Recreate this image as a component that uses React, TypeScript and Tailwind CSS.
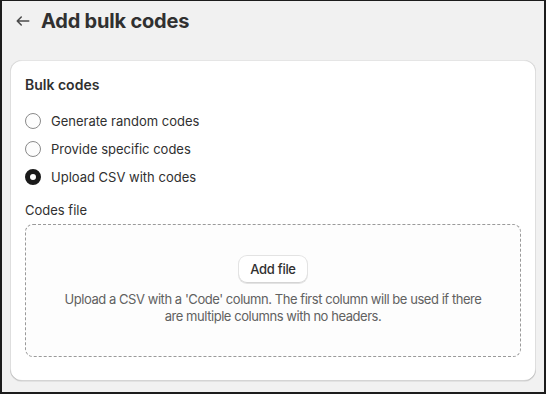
import { useState } from "react"

const font = { fontFamily: "Inter, 'Noto Sans', sans-serif" }

type Option = { id: string; label: string }

const options: Option[] = [
	{ id: "random", label: "Generate random codes" },
	{ id: "specific", label: "Provide specific codes" },
	{ id: "csv", label: "Upload CSV with codes" },
]

function Radio({ checked }: { checked: boolean }) {
	if (checked) {
		return <span className="w-4 h-4 rounded-full border-[5px] border-[#1a1a1a] bg-white shrink-0" />
	}
	return <span className="w-4 h-4 rounded-full border border-[#8a8a8a] bg-[#fdfdfd] shrink-0" />
}

export default function App() {
	const [mode, setMode] = useState("csv")

	return (
		<div style={font} className="w-[546px] h-[394px] bg-[#f1f1f1] border-l-2 border-r-2 border-b-2 border-t border-[#1c1c1c] flex flex-col text-[#303030] overflow-hidden">
			<div className="flex items-center h-[39px] pl-[11px] gap-[8px]">
				<button className="w-5 h-5 flex items-center justify-center text-[#4a4a4a]">
					<svg width="20" height="20" viewBox="0 0 20 20" fill="currentColor">
						<path fillRule="evenodd" d="M16.5 10a.75.75 0 0 1-.75.75h-9.69l2.72 2.72a.75.75 0 1 1-1.06 1.06l-4-4a.75.75 0 0 1 0-1.06l4-4a.75.75 0 1 1 1.06 1.06l-2.72 2.72h9.69a.75.75 0 0 1 .75.75Z" />
					</svg>
				</button>
				<h1 className="text-[20px] font-bold tracking-[-0.2px] leading-6">Add bulk codes</h1>
			</div>
			<div className="mx-2 mt-[20px] bg-white rounded-xl shadow-[0_1px_0_0_rgba(26,26,26,0.07),inset_0_1px_0_0_rgba(204,204,204,0.5),inset_0_-1px_0_0_rgba(0,0,0,0.17),inset_-1px_0_0_0_rgba(0,0,0,0.13),inset_1px_0_0_0_rgba(0,0,0,0.13)] px-[15px] pt-[15px] pb-[24px]">
				<h2 className="text-[14px] font-semibold leading-5">Bulk codes</h2>
				<div className="mt-[12px] flex flex-col">
					{options.map(o => (
						<label key={o.id} onClick={() => setMode(o.id)} className="flex items-center gap-[10px] h-[28px] cursor-pointer">
							<Radio checked={mode === o.id} />
							<span className="text-[13px] leading-5">{o.label}</span>
						</label>
					))}
				</div>
				<div className="mt-[9px] text-[13px] leading-5">Codes file</div>
				<div className="mt-[4px] h-[133px] rounded-lg border border-dashed border-[#9a9a9a] bg-[#fdfdfd] flex flex-col items-center justify-center">
					<button className="h-[27px] px-[11px] rounded-lg bg-white text-[13px] font-medium tracking-[-0.3px] text-[#303030] shadow-[0_0_0_1px_#e3e3e3,inset_0_-1px_0_0_#d4d4d4]">Add file</button>
					<p className="mt-[8px] text-[13px] tracking-[-0.45px] leading-[17px] text-[#616161] text-center w-[420px]">
						Upload a CSV with a 'Code' column. The first column will be used if there are multiple columns with no headers.
					</p>
				</div>
			</div>
		</div>
	)
}
